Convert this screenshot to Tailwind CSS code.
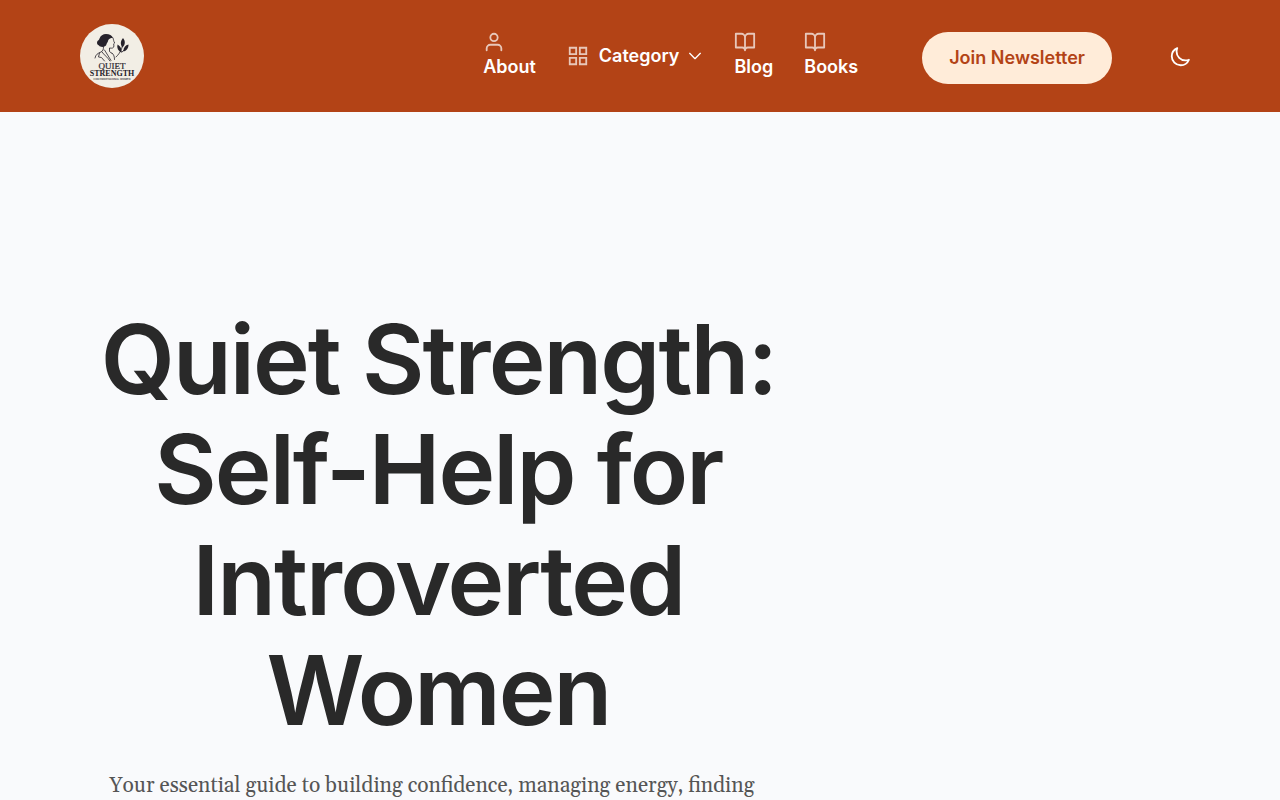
<!DOCTYPE html>
<html lang="en">
<head>
<meta charset="utf-8">
<meta name="viewport" content="width=device-width, initial-scale=1">
<title>Quiet Strength</title>
<script src="https://cdn.jsdelivr.net/npm/@tailwindcss/browser@4"></script>
</head>
<body class="h-screen overflow-hidden bg-[#f9fafc] font-[Inter,sans-serif] text-[#292929]">
<header class="flex items-center justify-between bg-[#b34316] px-20 py-6 text-white">
  <a href="#" aria-label="Quiet Strength home" class="size-16 shrink-0">
    <svg viewBox="0 0 64 64" class="size-16">
      <circle cx="32" cy="32" r="32" fill="#f2eee5"/>
      <g fill="#26222b">
        <path d="M19 21.500c-2-.5-2.500-3-1.500-4.500 1-1 1.500-.8 2-2.500 1-3 3.500-4.500 6.500-4.500 3.500 0 6 1.500 7 4-1.500-.3-3.500.2-4.500 1.700-.6 1-.5 2.300-1.500 3.300l-1 2.500-1.500 1c-2 .8-4.500.5-5.500-1z"/>
        <path d="M43 14c2.500 3 2.500 6.500-.5 9.500-2.500-3.500-2-6.500.5-9.500zM48.500 20.500c0 4-2 6.500-5.200 7 .2-4 2-6.200 5.200-7zM37.500 20.500c3 1.500 4.500 4.500 3.800 8-3.300-1.500-4.600-4.500-3.800-8z"/>
      </g>
      <g fill="none" stroke="#26222b" stroke-width=".8" stroke-linecap="round" stroke-linejoin="round">
        <path d="M33 14c.8 2 .4 3 1.700 5l-1 .8.2 2.200c0 2-1.700 2.500-4.400 2v3.500l2.500 2M23.500 22.500c0 3-.5 4.500-2.500 5.500-3 1.200-5.500 2.500-6 6M22 28c2 3 5.500 5 8 9M24.500 26l2.500 4 4 6.500M19.500 29l-1 4 3 .5 3 3.500M32 29c2 1.500 2.500 4 2.500 6.500"/>
        <path d="M43 16c0 6-1.500 12-7 17M47 23l-5 5M38.500 23l3 5"/>
      </g>
      <g fill="#26222b" text-anchor="middle" font-family="Liberation Serif, serif">
        <text x="32" y="44.500" font-size="9" stroke="#26222b" stroke-width=".2">QUIET</text>
        <text x="32" y="52" font-size="8" font-weight="700">STRENGTH</text>
        <text x="32" y="55.800" font-size="2.600" font-family="Inter, sans-serif" font-weight="500">FOR PROFESSIONAL WOMEN</text>
      </g>
    </svg>
  </a>
  <div class="flex items-center">
    <nav class="flex items-center gap-[31px] text-lg font-semibold leading-7">
      <a href="#" class="flex flex-col items-start">
        <svg class="size-[22px] opacity-70" viewBox="0 0 24 24" fill="none" stroke="currentColor" stroke-width="2" stroke-linecap="round" stroke-linejoin="round"><path d="M20 21v-2a4 4 0 0 0-4-4H8a4 4 0 0 0-4 4v2"/><circle cx="12" cy="7" r="4"/></svg>
        About
      </a>
      <button type="button" class="flex items-center gap-2">
        <svg class="mr-0.5 size-[22px] opacity-70" viewBox="0 0 24 24" fill="none" stroke="currentColor" stroke-width="2"><path d="M3 3h7v7H3zM14 3h7v7h-7zM14 14h7v7h-7zM3 14h7v7H3z"/></svg>
        Category
        <svg class="size-4" viewBox="0 0 24 24" fill="none" stroke="currentColor" stroke-width="2" stroke-linecap="round" stroke-linejoin="round"><path d="m4 8 8 8 8-8"/></svg>
      </button>
      <a href="#" class="flex flex-col items-start">
        <svg class="size-[22px] opacity-70" viewBox="0 0 24 24" fill="none" stroke="currentColor" stroke-width="2" stroke-linecap="round" stroke-linejoin="round"><path d="M2 3h6a4 4 0 0 1 4 4v14a3 3 0 0 0-3-3H2zM22 3h-6a4 4 0 0 0-4 4v14a3 3 0 0 1 3-3h7z"/></svg>
        Blog
      </a>
      <a href="#" class="flex flex-col items-start">
        <svg class="size-[22px] opacity-70" viewBox="0 0 24 24" fill="none" stroke="currentColor" stroke-width="2" stroke-linecap="round" stroke-linejoin="round"><path d="M2 3h6a4 4 0 0 1 4 4v14a3 3 0 0 0-3-3H2zM22 3h-6a4 4 0 0 0-4 4v14a3 3 0 0 1 3-3h7z"/></svg>
        Books
      </a>
    </nav>
    <button type="button" class="ml-16 mt-1 rounded-full bg-[#ffecd9] px-[27px] py-3 text-lg font-semibold leading-7 text-[#b34316]">Join Newsletter</button>
    <button type="button" aria-label="Switch to dark mode" class="ml-12 mt-0.5 flex size-10 items-center justify-center">
      <svg class="size-[22px]" viewBox="0 0 24 24" fill="none" stroke="currentColor" stroke-width="2" stroke-linecap="round" stroke-linejoin="round"><path d="M21.752 15.002A9.720 9.720 0 0 1 18 15.750c-5.385 0-9.750-4.365-9.750-9.750 0-1.330.266-2.597.748-3.752A9.753 9.753 0 0 0 3 11.250C3 16.635 7.365 21 12.750 21a9.753 9.753 0 0 0 9.002-5.998Z"/></svg>
    </button>
  </div>
</header>
<main class="px-20 pt-48">
  <section class="w-[64%]">
    <h1 class="text-center text-8xl font-semibold leading-[1.15] tracking-[-0.02em]">Quiet Strength: Self-Help for Introverted Women</h1>
    <p class="ml-4 mt-5 max-w-2xl text-center font-[Georgia,Gelasio,'Liberation_Serif',serif] text-[21px] leading-10 text-[#555555]">Your essential guide to building confidence, managing energy, finding</p>
  </section>
</main>
</body>
</html>
